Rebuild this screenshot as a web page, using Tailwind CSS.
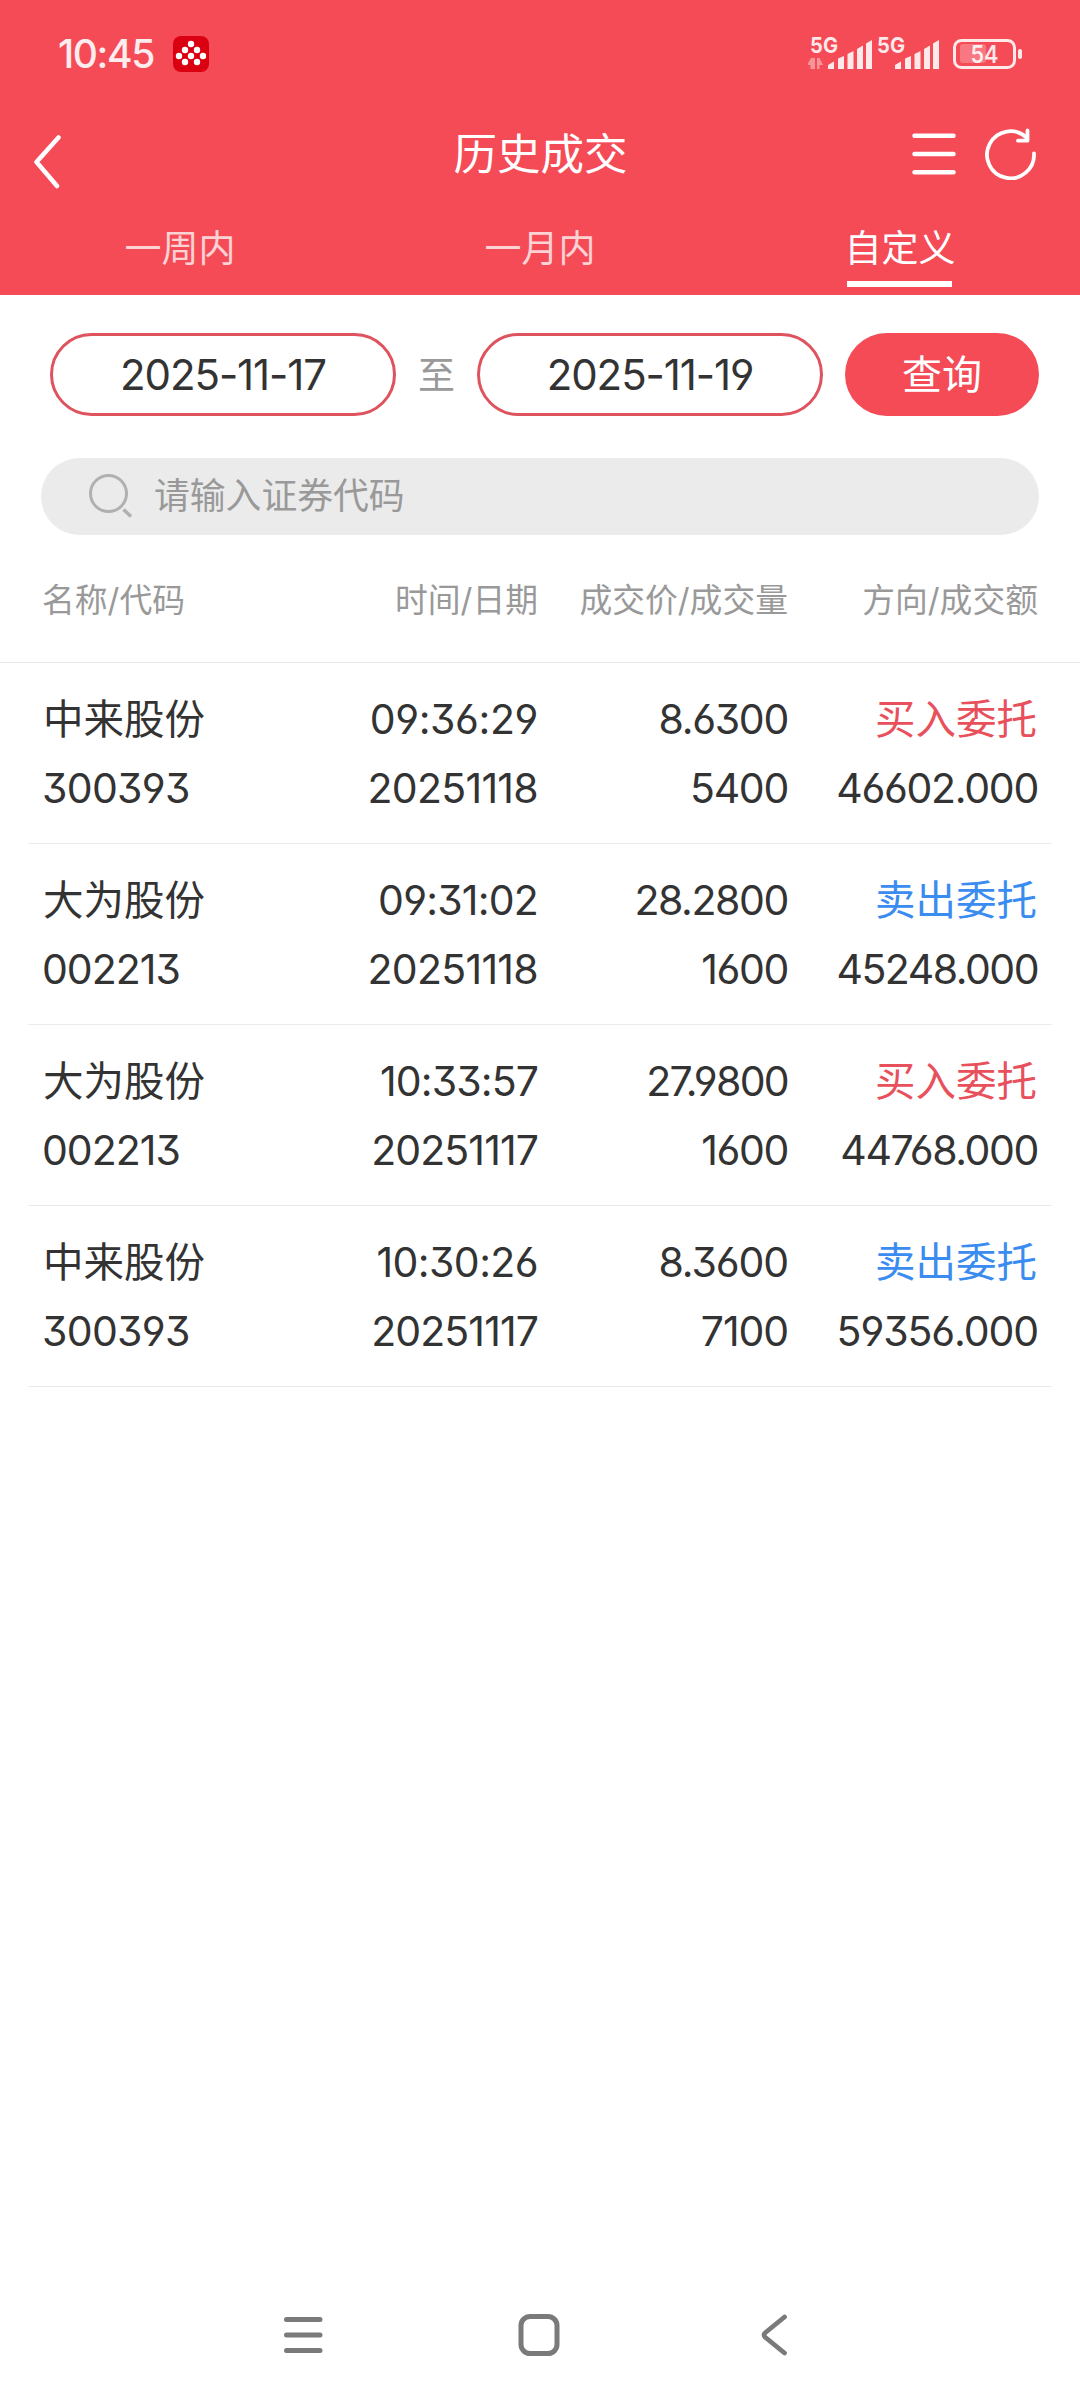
<!DOCTYPE html>
<html lang="zh-CN">
  <head>
    <meta charset="UTF-8" />
    <title>历史成交</title>
    <script src="https://cdn.jsdelivr.net/npm/@tailwindcss/browser@4"></script>
  </head>
  <body class="w-[1080px] h-[2400px] flex flex-col bg-white text-[#333] font-['Inter','Noto_Sans_CJK_SC',sans-serif] [font-feature-settings:'cv03','cv04','cv09'] whitespace-nowrap">
    <header class="h-[295px] bg-[#f54b57] text-white flex flex-col">
      <!-- status bar -->
      <div class="h-[108px] shrink-0 pl-[58px] pr-[58px] flex items-center justify-between">
        <div class="flex items-center">
          <span class="w-[115px] pt-px text-[39px] font-medium tracking-[-1.4px] text-white/90">10:45</span>
          <svg class="w-9 h-9" viewBox="0 0 36 36">
            <rect width="36" height="36" rx="8" fill="#db0011" />
            <g fill="#fff">
              <circle cx="18" cy="8" r="3.2" />
              <circle cx="12" cy="14" r="3.2" />
              <circle cx="24" cy="14" r="3.2" />
              <circle cx="6" cy="20" r="3.2" />
              <circle cx="18" cy="20" r="3.2" />
              <circle cx="30" cy="20" r="3.2" />
              <circle cx="12" cy="26" r="3.2" />
              <circle cx="24" cy="26" r="3.2" />
            </g>
          </svg>
        </div>
        <svg class="w-[214px] h-[52px] font-['Inter',sans-serif]" viewBox="0 -8 214 52" fill="#fff" fill-opacity="0.88">
          <text x="2" y="16.500" font-size="22" font-weight="700" textLength="28" lengthAdjust="spacingAndGlyphs">5G</text>
          <path fill-opacity="0.4" d="M5 22V33H2.500V29H-1L3 22zM5 22V33H7V22zM9 22V33H11.500V29H15L11.500 22z" />
          <path d="M20 33V29L26 25.500V33zM30 33V22.500L36 20V33zM39.500 33V18L45.500 15V33zM49 33V13L55 9.500V33zM58 33V7.500L64 4V33z" />
          <text x="69" y="16.500" font-size="22" font-weight="700" textLength="28" lengthAdjust="spacingAndGlyphs">5G</text>
          <path d="M87 33V29L93 25.500V33zM97 33V22.500L103 20V33zM106.500 33V18L112.500 15V33zM116 33V13L122 9.500V33zM125 33V7.500L131 4V33z" />
          <rect x="146.500" y="4.500" width="60" height="27" rx="7" fill="none" stroke="#fff" stroke-opacity="0.88" stroke-width="3" />
          <rect x="152" y="8" width="26" height="19" rx="3" fill-opacity="0.25" />
          <text x="162.500" y="27" font-size="24" font-weight="600" textLength="28" lengthAdjust="spacingAndGlyphs">54</text>
          <rect x="210" y="13" width="4" height="10" rx="2" />
        </svg>
      </div>
      <!-- title bar -->
      <div class="h-[92px] shrink-0 pl-[33px] pr-[43px] grid grid-cols-3 items-center">
        <svg class="w-7 h-[54px] mt-[15px]" viewBox="0 0 28 54" fill="none" stroke="#fff" stroke-width="4.5" stroke-linecap="round" stroke-linejoin="round">
          <path d="M25.500 2.500L3.500 27L24 51" />
        </svg>
        <h1 class="text-center text-[43.500px] leading-[60px] pl-[11px]">历史成交</h1>
        <div class="flex justify-end items-center gap-[29px]">
          <svg class="w-11 h-[50px]" viewBox="0 0 44 50" stroke="#fff" stroke-width="4.5" stroke-linecap="round">
            <path d="M2.500 6.700H41.500M2.500 25H41.500M2.500 43.300H41.500" />
          </svg>
          <svg class="w-[52px] h-[52px]" viewBox="0 0 52 52" fill="none" stroke="#fff" stroke-width="3.800" stroke-linecap="round" stroke-linejoin="round">
            <path d="M49 25.500A23.500 23.500 0 1 1 41.500 9.500" />
            <path d="M42.500 2.500V12.700H33" />
          </svg>
        </div>
      </div>
      <!-- period tabs -->
      <nav class="h-[95px] pt-[5px] grid grid-cols-3 text-center text-[37px] leading-[88px]">
        <span class="text-white/75">一周内</span>
        <span class="text-white/75">一月内</span>
        <span class="relative">自定义<i class="absolute left-[127px] top-[76px] w-[105px] h-1.5 bg-white"></i></span>
      </nav>
    </header>

    <div class="pt-[38px] pl-[50px] pr-[41px] flex items-center justify-between text-[40px]">
      <span class="w-[346px] h-[83px] flex items-center justify-center rounded-full border-3 border-[#de535d] text-[42px] tracking-[-1.1px]">2025-11-17</span>
      <span class="text-[37px] text-[#999] pt-0.5">至</span>
      <span class="w-[346px] h-[83px] flex items-center justify-center rounded-full border-3 border-[#de535d] text-[42px] tracking-[-1.1px]">2025-11-19</span>
      <button class="w-[194px] h-[83px] rounded-full bg-[#f54b57] text-white">查询</button>
    </div>

    <div class="mt-[42px] ml-[41px] w-[998px] h-[77px] pl-[47px] flex items-center rounded-full bg-[#ebebeb]">
      <svg class="w-[46px] h-[46px] mr-5" viewBox="0 0 46 46" fill="none" stroke="#b0b0b0" stroke-width="3">
        <circle cx="20.500" cy="19.500" r="18" />
        <path d="M35.500 35.500L43 42.500" stroke-width="3.500" />
      </svg>
      <span class="text-[35.800px] text-[#999] pt-px">请输入证券代码</span>
    </div>

    <div class="h-[128px] pl-[42px] pr-[41px] pt-1 grid grid-cols-[246px_250px_250px_250px] items-center border-b border-[#e6e6e6] text-right text-[32.800px] text-[#999]">
      <span class="text-left">名称/代码</span>
      <span>时间/日期</span>
      <span>成交价/成交量</span>
      <span>方向/成交额</span>
    </div>

    <main class="px-7 text-right text-[41px] leading-[69px]">
      <div class="h-[181px] pt-[22px] pl-[14px] grid grid-cols-[247px_249px_250px_250px] border-b border-[#ebebeb]">
        <div class="text-left"><p class="pl-px text-[40.500px]">中来股份</p><p class="tracking-[-0.700px]">300393</p></div>
        <div><p class="tracking-[-0.400px]">09:36:29</p><p class="tracking-[-0.700px]">20251118</p></div>
        <div class="tracking-[-1.300px]"><p>8.6300</p><p>5400</p></div>
        <div><p class="pr-px text-[40.500px] text-[#e8505b]">买入委托</p><p class="tracking-[-1.300px]">46602.000</p></div>
      </div>
      <div class="h-[181px] pt-[22px] pl-[14px] grid grid-cols-[247px_249px_250px_250px] border-b border-[#ebebeb]">
        <div class="text-left"><p class="pl-px text-[40.500px]">大为股份</p><p class="tracking-[-1px]">002213</p></div>
        <div><p class="tracking-[-0.800px]">09:31:02</p><p class="tracking-[-0.700px]">20251118</p></div>
        <div class="tracking-[-1.400px]"><p>28.2800</p><p>1600</p></div>
        <div><p class="pr-px text-[40.500px] text-[#3a8cf0]">卖出委托</p><p class="tracking-[-1.500px]">45248.000</p></div>
      </div>
      <div class="h-[181px] pt-[22px] pl-[14px] grid grid-cols-[247px_249px_250px_250px] border-b border-[#ebebeb]">
        <div class="text-left"><p class="pl-px text-[40.500px]">大为股份</p><p class="tracking-[-1px]">002213</p></div>
        <div><p class="tracking-[-0.900px]">10:33:57</p><p class="tracking-[-0.900px]">20251117</p></div>
        <div><p class="tracking-[-1.700px]">27.9800</p><p class="tracking-[-1.400px]">1600</p></div>
        <div><p class="pr-px text-[40.500px] text-[#e8505b]">买入委托</p><p class="tracking-[-1.400px]">44768.000</p></div>
      </div>
      <div class="h-[181px] pt-[22px] pl-[14px] grid grid-cols-[247px_249px_250px_250px] border-b border-[#ebebeb]">
        <div class="text-left"><p class="pl-px text-[40.500px]">中来股份</p><p class="tracking-[-0.700px]">300393</p></div>
        <div><p class="tracking-[-0.600px]">10:30:26</p><p class="tracking-[-0.900px]">20251117</p></div>
        <div class="tracking-[-1.100px]"><p>8.3600</p><p>7100</p></div>
        <div><p class="pr-px text-[40.500px] text-[#3a8cf0]">卖出委托</p><p class="tracking-[-1.100px]">59356.000</p></div>
      </div>
    </main>

    <!-- system navigation -->
    <footer class="mt-auto h-[130px] pl-[283px] flex items-center">
      <svg class="w-10 h-11" viewBox="0 0 40 44" stroke="#7a7a7a" stroke-width="5" stroke-linecap="round">
        <path d="M3.500 6.500H37M3.500 22H37M3.500 37.500H37" />
      </svg>
      <svg class="w-[42px] h-11 ml-[195px]" viewBox="0 0 42 44" fill="none" stroke="#7a7a7a" stroke-width="5">
        <rect x="3" y="3.500" width="36" height="37" rx="9" />
      </svg>
      <svg class="w-[26px] h-11 ml-[201px]" viewBox="0 0 26 44" fill="none" stroke="#7a7a7a" stroke-width="4.800" stroke-linecap="round">
        <path d="M23.500 4L4.500 19.500Q1.500 22 4.500 24.500L23.500 40" />
      </svg>
    </footer>
  </body>
</html>
